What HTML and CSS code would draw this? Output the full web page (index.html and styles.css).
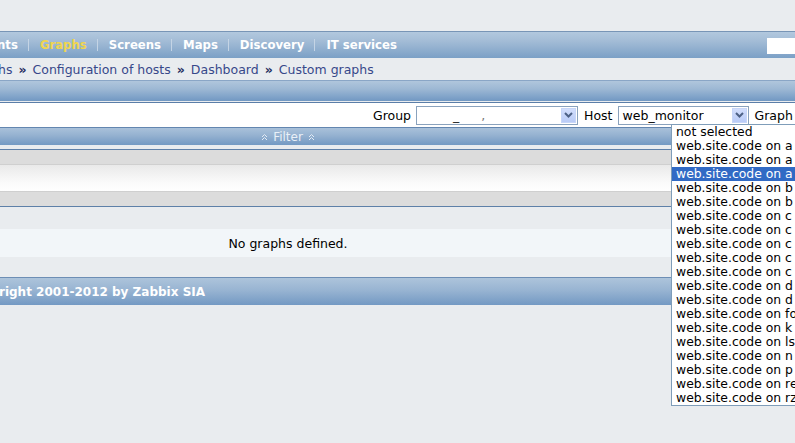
FILE: index.html
```html
<!DOCTYPE html>
<html>
<head>
<meta charset="utf-8">
<link rel="stylesheet" href="styles.css">
</head>
<body>
<div class="topgap"></div>
<div class="menubar">
  <nav class="menu">
    <span class="item">nts</span><span class="sep"></span>
    <span class="item active">Graphs</span><span class="sep"></span>
    <span class="item">Screens</span><span class="sep"></span>
    <span class="item">Maps</span><span class="sep"></span>
    <span class="item">Discovery</span><span class="sep"></span>
    <span class="item">IT services</span>
  </nav>
  <div class="search"></div>
</div>
<div class="crumbs">
  <span>hs</span><span class="arr">»</span>
  <span>Configuration of hosts</span><span class="arr">»</span>
  <span>Dashboard</span><span class="arr">»</span>
  <span>Custom graphs</span>
</div>
<div class="titlebar"></div>
<div class="filter">
  <div class="filter-row">
    <span class="lbl">Group</span>
    <div class="select sel-group">
      <span class="val"><span class="u">_</span><span class="c">,</span></span>
      <span class="btn"><svg width="9" height="6" viewBox="0 0 9 6"><polyline points="1,1 4.5,4.5 8,1" fill="none" stroke="#4d6185" stroke-width="2"/></svg></span>
    </div>
    <span class="lbl lbl-host">Host</span>
    <div class="select sel-host">
      <span class="val">web_monitor</span>
      <span class="btn"><svg width="9" height="6" viewBox="0 0 9 6"><polyline points="1,1 4.5,4.5 8,1" fill="none" stroke="#4d6185" stroke-width="2"/></svg></span>
    </div>
    <span class="lbl lbl-graph">Graph</span>
  </div>
  <div class="filter-bar">
    <div class="center">
      <svg class="chev" width="7" height="8" viewBox="0 0 7 8"><polyline points="1,4 3.5,1.5 6,4" fill="none" stroke="#e3ebf4" stroke-width="1"/><polyline points="1,7 3.5,4.5 6,7" fill="none" stroke="#e3ebf4" stroke-width="1"/></svg>
      <span class="ftxt">Filter</span>
      <svg class="chev" width="7" height="8" viewBox="0 0 7 8"><polyline points="1,4 3.5,1.5 6,4" fill="none" stroke="#e3ebf4" stroke-width="1"/><polyline points="1,7 3.5,4.5 6,7" fill="none" stroke="#e3ebf4" stroke-width="1"/></svg>
    </div>
  </div>
</div>
<div class="gtable">
  <div class="g1"></div>
  <div class="g2"></div>
  <div class="g3"></div>
</div>
<div class="list">
  <div class="r1"></div>
  <div class="r2"><div class="center">No graphs defined.</div></div>
  <div class="r3"></div>
</div>
<div class="footer">right 2001-2012 by Zabbix SIA</div>

<ul class="dropdown">
  <li>not selected</li>
  <li>web.site.code on a</li>
  <li>web.site.code on a</li>
  <li class="on">web.site.code on a</li>
  <li>web.site.code on b</li>
  <li>web.site.code on b</li>
  <li>web.site.code on c</li>
  <li>web.site.code on c</li>
  <li>web.site.code on c</li>
  <li>web.site.code on c</li>
  <li>web.site.code on c</li>
  <li>web.site.code on d</li>
  <li>web.site.code on d</li>
  <li>web.site.code on fo</li>
  <li>web.site.code on k</li>
  <li>web.site.code on ls</li>
  <li>web.site.code on n</li>
  <li>web.site.code on p</li>
  <li>web.site.code on re</li>
  <li>web.site.code on rz</li>
</ul>
</body>
</html>
```

FILE: styles.css
```css
html, body {
  margin: 0;
  padding: 0;
}
body {
  background: #e9ecef;
  font-family: "DejaVu Sans", Verdana, sans-serif;
  font-size: 12.5px;
  width: 795px;
  height: 443px;
  overflow: hidden;
  position: relative;
  color: #000;
}
.topgap { height: 31px; }

.menubar {
  box-sizing: border-box;
  height: 27px;
  border-top: 1px solid #7895b6;
  background: linear-gradient(#b2c8de, #a3bcd6 35%, #7ba0c6);
  display: flex;
  align-items: center;
  justify-content: space-between;
}
.menu {
  display: flex;
  align-items: center;
  margin-left: -3px;
  font-weight: bold;
  font-size: 11.7px;
  color: #fff;
  white-space: nowrap;
}
.menu .active { color: #f0d54e; }
.menu .sep {
  display: inline-block;
  width: 1px;
  height: 12px;
  background: #c4d4e5;
  margin: 0 11px 0 10px;
}
.search {
  width: 28px;
  height: 16px;
  background: #fff;
  margin-top: 1px;
}

.crumbs {
  height: 22px;
  display: flex;
  align-items: center;
  margin-left: -2px;
  color: #37488a;
  white-space: nowrap;
}
.crumbs .arr {
  font-weight: bold;
  color: #1f2b5e;
  margin: 0 6px 0 6px;
}

.titlebar {
  box-sizing: border-box;
  height: 21px;
  border-top: 1px solid #8aa6c6;
  background: linear-gradient(#b0c6dc, #9db8d4 40%, #7198c3);
}

.filter {
  margin-top: 1px;
  border-top: 1px solid #5b7ea8;
}
.filter-row {
  box-sizing: border-box;
  height: 24px;
  background: #fff;
  display: flex;
  align-items: center;
  padding-left: 373px;
  white-space: nowrap;
}
.select {
  box-sizing: border-box;
  height: 19px;
  border: 1px solid #8aa2bd;
  background: #fff;
  display: flex;
  align-items: center;
  justify-content: space-between;
  margin-left: 5px;
}
.sel-group { width: 162px; }
.sel-host { width: 131px; }
.select .val {
  padding-left: 4px;
  overflow: hidden;
}
.select .u { margin-left: 32px; color: #222; }
.select .c { margin-left: 22px; color: #777; }
.select .btn {
  box-sizing: border-box;
  width: 15px;
  height: 15px;
  margin-right: 1px;
  background: linear-gradient(#d2defc, #b9cbf7);
  border: 1px solid #c7d6f8;
  display: flex;
  align-items: center;
  justify-content: center;
}
.lbl-host { margin-left: 6px; }
.lbl-graph { margin-left: 6px; }

.filter-bar {
  box-sizing: border-box;
  height: 18px;
  border-top: 1px solid #6386b0;
  background: linear-gradient(#a9c1da, #94b1d0 45%, #7399c3);
  color: #e9f0f7;
  font-size: 12px;
  display: flex;
  align-items: center;
}
.center {
  width: 576px;
  text-align: center;
  display: flex;
  align-items: center;
  justify-content: center;
}
.chev { margin: 0 5px; }

.gtable {
  margin-top: 4px;
  border-top: 1px solid #5e80a8;
  border-bottom: 1px solid #5e80a8;
}
.g1 { height: 14px; background: #dcdcdc; border-bottom: 1px solid #cfcfcf; }
.g2 { height: 26px; background: linear-gradient(#e9e9e9, #fbfbfb 70%, #ffffff); }
.g3 { height: 14px; background: #dcdcdc; border-top: 1px solid #cfcfcf; }

.list .r1 { height: 22px; background: #e9ecef; }
.list .r2 {
  height: 28px;
  background: #f2f6f9;
  display: flex;
  align-items: center;
}
.list .r3 { height: 20px; background: #e9ecef; }

.footer {
  box-sizing: border-box;
  height: 28px;
  border-top: 1px solid #6d8eb5;
  background: linear-gradient(#adc4db, #98b4d2 45%, #7399c3);
  color: #fff;
  font-weight: bold;
  font-size: 12px;
  display: flex;
  align-items: center;
  margin-left: -1px;
  white-space: nowrap;
}

.dropdown {
  position: absolute;
  left: 671px;
  top: 124px;
  width: 140px;
  margin: 0;
  padding: 0;
  list-style: none;
  background: #fff;
  border: 1px solid #7f9db9;
}
.dropdown li {
  height: 14px;
  line-height: 14px;
  padding-left: 4px;
  white-space: nowrap;
  overflow: hidden;
  font-size: 12.4px;
}
.dropdown li.on {
  background: #316ac5;
  color: #fff;
}
```
